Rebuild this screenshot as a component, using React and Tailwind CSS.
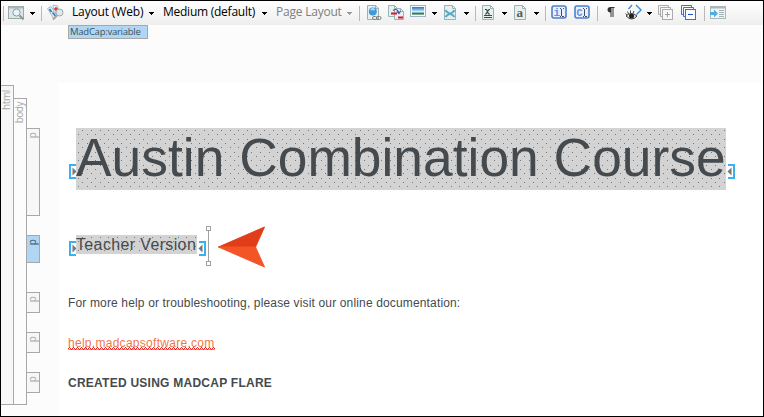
import React from 'react';

const ui = "font-['Open_Sans','Noto_Sans',sans-serif]";

function Caret({ className = 'text-black' }) {
  return (
    <svg width="5" height="3" viewBox="0 0 5 3" shapeRendering="crispEdges" className={'block shrink-0 ' + className}>
      <path d="M0 0h5v1h-1v1h-1v1h-1v-1h-1v-1h-1z" fill="currentColor" />
    </svg>
  );
}

function Separator({ className }) {
  return <div className={'h-[15px] w-px shrink-0 bg-[#b9b9b9] ' + className} />;
}

function Icon({ className = '', width = 16, children }) {
  return (
    <svg width={width} height="18" viewBox={`0 0 ${width} 18`} className={'block shrink-0 ' + className} fill="none">
      {children}
    </svg>
  );
}

function PageShape({ x = 0.5, y = 1.5, w = 11, h = 14 }) {
  return (
    <path
      d={`M${x} ${y}h${w - 3}l3 3v${h - 3}h${-w}z M${x + w - 3} ${y}v3h3`}
      fill="#e6f0ef"
      stroke="#9db3b2"
    />
  );
}

function Toolbar() {
  return (
    <div className={'flex h-6 shrink-0 items-center bg-gradient-to-b from-white to-[#eeeeee] text-[12px] leading-[20px] text-black ' + ui}>
      <Separator className="ml-[2px]" />
      <Icon className="ml-[4px]" width={17}>
        <rect x=".5" y="2.5" width="15" height="12" fill="#dce8e6" stroke="#9aa9a8" />
        <path d="M1 3.5h14" stroke="#a9b9b8" strokeWidth="2" />
        <circle cx="8.5" cy="8.5" r="3.6" fill="#e8f4fa" stroke="#8c9ca4" />
        <path d="M11.5 11.5l4 4" stroke="#949494" strokeWidth="2" />
      </Icon>
      <Caret className="ml-[5px] text-black" />
      <Separator className="ml-[6px]" />
      <Icon className="ml-[5px]" width={17}>
        <path d="M.5 4.500l3.500-2 6 9-3.500 3z" fill="#e3eff5" stroke="#a9bcc5" />
        <path d="M2.500 5l2 3M5.500 8.500l3 3.500" stroke="#2f83c0" strokeWidth="1.800" />
        <path d="M6 1l5 1v6l-4 0z" fill="#edf3f3" stroke="#b5c2c3" />
        <path d="M7 5h4M9 3v4" stroke="#df3831" strokeWidth="1.500" />
        <circle cx="12.500" cy="8.500" r="3.500" fill="#dfeaf0" stroke="#a0a6aa" />
        <path d="M10 11.500l-4 4" stroke="#a5a5a5" strokeWidth="2" />
      </Icon>
      <span className="mt-[-2px] ml-[8px] w-[71px] whitespace-nowrap tracking-[-0.15px]">Layout (Web)</span>
      <Caret className="ml-[6px] text-black" />
      <span className="mt-[-2px] ml-[9px] w-[92px] whitespace-nowrap tracking-[-0.25px]">Medium (default)</span>
      <Caret className="ml-[7px] text-black" />
      <span className="mt-[-2px] ml-[9px] w-[66px] whitespace-nowrap tracking-[-0.22px] text-[#808080]">Page Layout</span>
      <Caret className="ml-[5px] text-[#999]" />
      <Separator className="ml-[7px]" />
      <Icon className="ml-[7px]">
        <PageShape />
        <circle cx="5.800" cy="7.500" r="4" fill="#3f97dc" />
        <path d="M3 6.500c1-3 4-3 5-1-1 2-3 0-5 1z" fill="#a8daf8" />
        <rect x="5.500" y="12.500" width="4.500" height="3" rx="1.500" fill="#e9e9e9" stroke="#808080" />
        <rect x="9.500" y="12.500" width="4.500" height="3" rx="1.500" stroke="#808080" />
      </Icon>
      <Icon className="ml-[5px]">
        <PageShape w={9} h={11} />
        <PageShape x={6.5} y={4.5} w={9} h={11} />
        <path d="M3 9.500h6M10 13.500h5" stroke="#d61725" strokeWidth="2" />
        <path d="M5 6.500c3-2 5-1 6 3M9 7.500l2 2 1.500-2.500" stroke="#4653c8" strokeWidth="1.200" />
      </Icon>
      <Icon className="ml-[6px]">
        <defs>
          <linearGradient id="photo" x1="0" y1="0" x2="0" y2="1">
            <stop offset="0" stopColor="#2f74c0" />
            <stop offset=".3" stopColor="#6fb2e4" />
            <stop offset=".6" stopColor="#e2f3f8" />
            <stop offset=".8" stopColor="#34707a" />
            <stop offset="1" stopColor="#9cc890" />
          </linearGradient>
        </defs>
        <rect x=".5" y="1.500" width="15" height="11" fill="#f6fafb" stroke="#a0b5bd" />
        <rect x="2" y="3" width="12" height="8" fill="url(#photo)" />
      </Icon>
      <Caret className="ml-[6px] text-black" />
      <Icon className="ml-[7px]" width={14}>
        <PageShape />
        <path d="M1.500 6c1 4 7 3 9 7M10.500 6c-1 4-7 3-9 7" stroke="#58a9c4" strokeWidth="2" />
      </Icon>
      <Caret className="ml-[6px] text-black" />
      <Separator className="ml-[6px]" />
      <Icon className="ml-[6px]" width={13}>
        <PageShape />
        <path d="M3 5.500h1.500l2 4.500h1.500M8 5.500h-1l-3 4.500h-1" stroke="#424848" strokeWidth="1.200" />
        <path d="M2 11.500h8M2 13.500h8" stroke="#424848" />
      </Icon>
      <Caret className="ml-[7px] text-black" />
      <Icon className="ml-[7px]" width={13}>
        <PageShape />
        <text x="2.500" y="13" fontSize="13" fontWeight="bold" fontFamily="Liberation Serif, serif" fill="#555b5b">a</text>
      </Icon>
      <Caret className="ml-[7px] text-black" />
      <Separator className="ml-[6px]" />
      <Icon className="ml-[5px]">
        <rect x="1" y="2" width="14" height="12" rx="2" fill="#e8f0ff" stroke="#4a80cf" strokeWidth="1.600" />
        <text x="2.500" y="12" fontSize="11" fontWeight="bold" fontFamily="Liberation Mono, monospace" fill="#6a8ed8">i</text>
        <path d="M9 4.500h1M12 4.500h1M10.500 5v7M9 12.500h1M11 12.500h2" stroke="#454d59" />
      </Icon>
      <Icon className="ml-[7px]">
        <rect x="1" y="2" width="14" height="12" rx="2" fill="#e8f0ff" stroke="#4a80cf" strokeWidth="1.600" />
        <text x="2.500" y="11.500" fontSize="10" fontWeight="bold" fontFamily="Liberation Mono, monospace" fill="#6a8ed8">C</text>
        <path d="M9 4.500h1M12 4.500h1M10.500 5v7M9 12.500h1M11 12.500h2" stroke="#454d59" />
      </Icon>
      <Separator className="ml-[7px]" />
      <Icon className="ml-[9px]" width={8}>
        <path d="M3.500 3h4v1h-1v9h-1v-9h-1v9h-1v-4.500c-4 0-4-5.500 0-5.500z" fill="#333" />
      </Icon>
      <Icon className="ml-[10px]" width={17}>
        <path d="M7 1L3.500 5M11 1l5 5-4.500 4.500" stroke="#318cdb" strokeWidth="1.400" />
        <path d="M1 12q5-5 11 0-5 6-11 0z" fill="#ddd" stroke="#444" />
        <circle cx="6.500" cy="12" r="2.500" fill="#222" />
        <path d="M.5 9.500l1.500 1.500M2.500 7.500l1 2.500M5.500 6.500v2.500M9 7l-1 2.500" stroke="#444" />
      </Icon>
      <Caret className="ml-[5px] text-black" />
      <Icon className="ml-[6px]">
        <path d="M2.500 10.500h-2v-9h10v2M4.500 12.500h-2v-9h10v2" stroke="#ababab" />
        <rect x="4.500" y="5.500" width="10" height="10" fill="#f7f7f7" stroke="#ababab" />
        <path d="M7 10.500h5M9.500 8v5" stroke="#a0a0a0" />
      </Icon>
      <Icon className="ml-[7px]">
        <path d="M2.500 10.500h-2v-9h10v2M4.500 12.500h-2v-9h10v2" stroke="#4169ee" />
        <rect x="4.500" y="5.500" width="10" height="10" fill="#fbfcff" stroke="#4169ee" />
        <path d="M7 10.500h5" stroke="#234bd0" />
      </Icon>
      <Separator className="ml-[7px]" />
      <Icon className="ml-[5px]">
        <rect x=".5" y="2.500" width="15" height="12" fill="#f0f5f5" stroke="#adb5b5" />
        <path d="M1 3.500h14" stroke="#adb5b5" strokeWidth="2" />
        <path d="M9 6.500h5M9 8.500h5M9 10.500h5M9 12.500h5" stroke="#a5b3b7" />
        <path d="M0 8h4v-2.500l4 4-4 4v-2.500h-4z" fill="#4cafe0" />
      </Icon>
    </div>
  );
}

function TagLabel({ children, className = '' }) {
  return (
    <span className={'text-[10px] leading-[11px] [writing-mode:vertical-rl] rotate-180 ' + className}>{children}</span>
  );
}

function ParagraphTag({ className }) {
  return (
    <div className={'flex w-[13px] shrink-0 items-start justify-start border border-l-0 border-[#a8a8a8] pt-[3px] ' + className}>
      <TagLabel>p</TagLabel>
    </div>
  );
}

function StructureBars() {
  return (
    <div className={'flex w-[57px] shrink-0 items-start text-[#a8a8a8] ' + ui}>
      <div className="mt-[60px] flex h-[320px] w-[13px] items-start justify-start border-y border-r border-[#a8a8a8] bg-[#f7f7f7] pt-[4px]">
        <TagLabel className="tracking-[-0.4px]">html</TagLabel>
      </div>
      <div className="mt-[73px] flex h-[307px] w-[13px] items-start justify-start border-y border-r border-[#a8a8a8] pt-[3px]">
        <TagLabel className="tracking-[-0.5px]">body</TagLabel>
      </div>
      <div className="flex flex-col pt-[103px]">
        <ParagraphTag className="h-[88px] bg-[#f7f7f7]" />
        <ParagraphTag className="mt-[19px] h-[28px] bg-[#b1d6f3] text-[#3b566b]" />
        <ParagraphTag className="mt-[29px] h-[21px] bg-[#f7f7f7]" />
        <ParagraphTag className="mt-[19px] h-[21px] bg-[#f7f7f7]" />
        <ParagraphTag className="mt-[19px] h-[21px] bg-[#f7f7f7]" />
      </div>
    </div>
  );
}

function Bracket({ className = '' }) {
  return (
    <svg width="8" height="15" viewBox="0 0 8 15" className={'block shrink-0 ' + className}>
      <path d="M8 1H2v13h6" transform="translate(-1 0)" fill="none" stroke="#39b0f0" strokeWidth="2" />
      <path d="M3.500 3.500v8l4-4z" fill="#777" />
    </svg>
  );
}

function Dots({ id }) {
  return (
    <svg className="absolute inset-0 h-full w-full" shapeRendering="crispEdges">
      <defs>
        <pattern id={id} width="26" height="26" patternUnits="userSpaceOnUse">
          <path
            d="M6 2h1v1h-1zM15 2h1v1h-1zM24 2h1v1h-1zM2 6h1v1h-1zM11 6h1v1h-1zM19 6h1v1h-1zM6 11h1v1h-1zM15 11h1v1h-1zM24 11h1v1h-1zM2 15h1v1h-1zM11 15h1v1h-1zM19 15h1v1h-1zM6 19h1v1h-1zM15 19h1v1h-1zM24 19h1v1h-1zM2 24h1v1h-1zM11 24h1v1h-1zM19 24h1v1h-1z"
            fill="#777"
          />
        </pattern>
      </defs>
      <rect width="100%" height="100%" fill={`url(#${id})`} />
    </svg>
  );
}

function ResizeHandle() {
  return (
    <div className="flex w-[5px] flex-col items-center">
      <div className="h-[5px] w-[5px] border border-[#a0a0a0] bg-white" />
      <div className="h-[30px] w-px bg-[#a0a0a0]" />
      <div className="h-[5px] w-[5px] border border-[#a0a0a0] bg-white" />
    </div>
  );
}

function Document() {
  return (
    <div className="mt-[44px] flex grow flex-col bg-white pl-[10px] pt-[45px] font-['Liberation_Sans',Arial,sans-serif] text-[#454a4e]">
      <div className="ml-px flex h-[62px] items-start">
        <Bracket className="mt-[36px]" />
        <div className="relative ml-[-1px] h-[62px] w-[650px] shrink-0 bg-[#d3d3d3]">
          <Dots id="title-dots" />
          <h1 className="relative whitespace-nowrap text-[53.33px] leading-[60px] tracking-[0.02px]">Austin Combination Course</h1>
        </div>
        <Bracket className="ml-[1px] mt-[36px] rotate-180" />
      </div>
      <div className="ml-px mt-[36px] flex h-[40px] items-start">
        <Bracket className="mt-[15px]" />
        <div className="relative ml-[-1px] mt-[9px] h-[19px] w-[121px] shrink-0 bg-[#d3d3d3]">
          <Dots id="subtitle-dots" />
          <p className="relative whitespace-nowrap text-[16px] leading-[19px] tracking-[0.36px]">Teacher Version</p>
        </div>
        <Bracket className="ml-[1px] mt-[15px] rotate-180" />
        <ResizeHandle />
        <svg width="49" height="42" viewBox="0 0 49 42" className="ml-[6px] block shrink-0">
          <path d="M1.500 21L47.500 1L38.500 21z" fill="#e23d19" stroke="#e23d19" strokeLinejoin="round" />
          <path d="M1.500 21L47.500 41L38.500 21z" fill="#f45527" stroke="#f45527" strokeLinejoin="round" />
        </svg>
      </div>
      <p className="mt-[30px] h-[14px] whitespace-nowrap text-[12px] leading-[14px] tracking-[0.15px]">
        For more help or troubleshooting, please visit our online documentation:
      </p>
      <div className="mt-[26px] h-[15px] w-[147px]">
        <p className="h-[11px] whitespace-nowrap text-[12px] leading-[14px] tracking-[0.28px] text-[#f0784d]">help.madcapsoftware.com</p>
        <svg width="147" height="3" className="block" shapeRendering="crispEdges">
          <defs>
            <pattern id="squiggle" width="4" height="3" patternUnits="userSpaceOnUse">
              <path d="M0 2h4v1h-4z" fill="#f58a66" />
              <path d="M0 1h1v1h-1zM1 0h1v1h-1zM2 1h1v1h-1zM3 2h1v1h-1z" fill="#f02020" />
            </pattern>
          </defs>
          <rect width="147" height="3" fill="url(#squiggle)" />
        </svg>
      </div>
      <p className="mt-[25px] h-[14px] whitespace-nowrap text-[12px] font-bold leading-[14px] tracking-[0.25px]">CREATED USING MADCAP FLARE</p>
    </div>
  );
}

export default function App() {
  return (
    <div className="flex h-[417px] w-[764px] flex-col overflow-hidden border border-black bg-[#fcfcfc]">
      <Toolbar />
      <div className="relative flex min-h-0 grow">
        <StructureBars />
        <div className="flex min-w-0 grow flex-col">
          <div className={'ml-[10px] h-[14px] w-[80px] shrink-0 whitespace-nowrap border border-[#a8a8a8] bg-[#b1d6f3] pl-[1px] text-[9.500px] leading-[11px] tracking-[-0.25px] text-[#3c5260] ' + ui}>
            MadCap:variable
          </div>
          <Document />
        </div>
      </div>
    </div>
  );
}
